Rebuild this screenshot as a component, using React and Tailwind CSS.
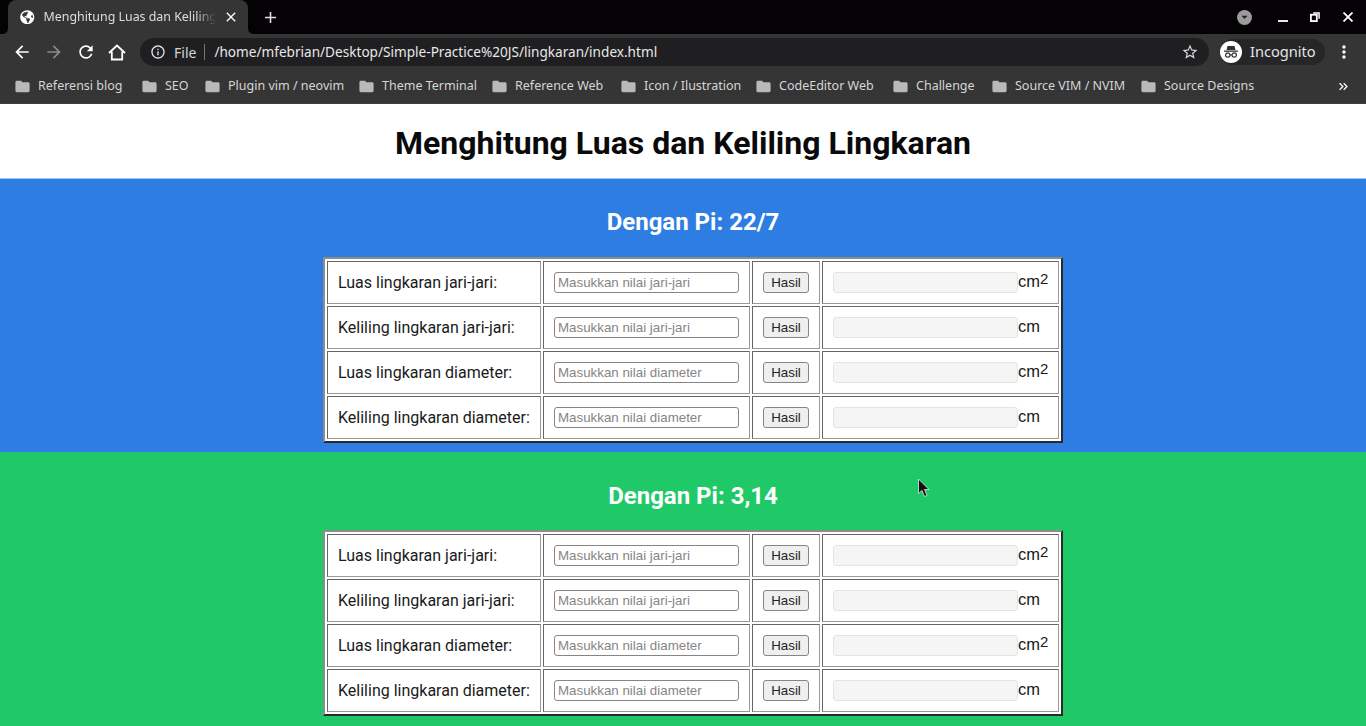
import React from "react";
import { MdArrowBack, MdArrowForward, MdRefresh, MdInfoOutline, MdStarBorder, MdMoreVert, MdKeyboardDoubleArrowRight, MdClose, MdAdd, MdFolder, MdArrowDropDown } from "react-icons/md";
import { FaGlobeAmericas } from "react-icons/fa";

const bookmarks = [
  ["Referensi blog", "w-[127px]"],
  ["SEO", "w-[63px]"],
  ["Plugin vim / neovim", "w-[154px]"],
  ["Theme Terminal", "w-[133px]"],
  ["Reference Web", "w-[129px]"],
  ["Icon / Ilustration", "w-[135px]"],
  ["CodeEditor Web", "w-[137px]"],
  ["Challenge", "w-[99px]"],
  ["Source VIM / NVIM", "w-[149px]"],
  ["Source Designs", "w-[120px]"],
];

const rows = [
  ["Luas lingkaran jari-jari:", "Masukkan nilai jari-jari", true],
  ["Keliling lingkaran jari-jari:", "Masukkan nilai jari-jari", false],
  ["Luas lingkaran diameter:", "Masukkan nilai diameter", true],
  ["Keliling lingkaran diameter:", "Masukkan nilai diameter", false],
];

function Calc() {
  return (
    <table className="border-separate border-spacing-[2px] border-2 border-t-[#8c8c8c] border-l-[#8c8c8c] border-r-[#2a2a2a] border-b-[#2a2a2a] bg-white w-[738px] table-fixed">
      <colgroup>
        <col className="w-[214px]" />
        <col className="w-[207px]" />
        <col className="w-[68px]" />
        <col className="w-[237px]" />
      </colgroup>
      <tbody>
        {rows.map(([label, ph, sq], i) => (
          <tr key={i} className="h-[43px]">
            <td className="border border-t-[#666] border-l-[#666] border-r-[#999] border-b-[#999] pl-[10px] p-0 text-[16px] text-[#1a1a1a] font-['Roboto',sans-serif] whitespace-nowrap">{label}</td>
            <td className="border border-t-[#666] border-l-[#666] border-r-[#999] border-b-[#999] pl-[10px] p-0">
              <input placeholder={ph} className="block -mt-px w-[185px] h-[21px] px-[3px] bg-white border border-[#858585] rounded-[3px] text-[13.33px] font-['Liberation_Sans',sans-serif] placeholder:text-[#858585] outline-none" />
            </td>
            <td className="border border-t-[#666] border-l-[#666] border-r-[#999] border-b-[#999] pl-[10px] p-0">
              <button className="block -mt-px w-[46px] h-[21px] bg-[#efefef] border border-[#858585] rounded-[3px] text-[13.33px] text-[#222] font-['Liberation_Sans',sans-serif]">Hasil</button>
            </td>
            <td className="border border-t-[#666] border-l-[#666] border-r-[#999] border-b-[#999] pl-[10px] p-0">
              <div className="flex items-center text-[16.5px] text-[#1a1a1a] font-['Liberation_Sans',sans-serif]">
                <input disabled className="block -mt-px w-[185px] h-[21px] bg-[#f5f5f5] border border-[#e4e4e4] rounded-[3px] outline-none" />
                <span className="relative bottom-[1px]">cm{sq && <sup className="text-[15px] relative -top-[3px] align-baseline">2</sup>}</span>
              </div>
            </td>
          </tr>
        ))}
      </tbody>
    </table>
  );
}

function Section({ title, bg, h, head }) {
  return (
    <section className={`${bg} ${h} flex flex-col items-center pl-5`}>
      <h2 className={`${head} text-[24px] leading-[28px] font-bold text-white font-['Roboto',sans-serif]`}>{title}</h2>
      <Calc />
    </section>
  );
}

export default function App() {
  return (
    <div className="relative w-[1366px] h-[726px] overflow-hidden bg-white">
      {/* tab strip */}
      <div className="h-[34px] bg-[#050205] flex items-stretch">
        <div className="ml-2 w-[240px] bg-[#353535] rounded-t-[8px] flex items-center pl-[12px] pr-[8px] text-[#dedede] relative">
          <svg className="absolute -left-[6px] bottom-0" width="6" height="6" viewBox="0 0 6 6"><path d="M0 6 Q6 6 6 0 V6Z" fill="#353535" /></svg>
          <svg className="absolute -right-[6px] bottom-0" width="6" height="6" viewBox="0 0 6 6"><path d="M6 6 Q0 6 0 0 V6Z" fill="#353535" /></svg>
          <FaGlobeAmericas className="text-white text-[14.5px] shrink-0" />
          <span className="ml-[9px] w-[172px] overflow-hidden whitespace-nowrap text-[12.4px] font-['Noto_Sans',sans-serif] [mask-image:linear-gradient(to_right,black_88%,transparent)]">Menghitung Luas dan Keliling</span>
          <MdClose className="ml-[7px] text-white text-[16px] shrink-0" />
        </div>
        <MdAdd className="ml-[13px] mt-[8px] text-[#dedede] text-[19px]" />
        <div className="flex-1" />
        <div className="flex items-center pr-[13px] text-white">
          <span className="w-[15px] h-[15px] rounded-full bg-[#9b9b9b] flex items-center justify-center mr-[26px]">
            <MdArrowDropDown className="text-[#222] text-[18px]" />
          </span>
          <span className="w-[10px] h-[2px] bg-[#e8e8e8] mt-[8px] mr-[22px]" />
          <svg width="10" height="10" viewBox="0 0 11 11" className="mr-[23px] -mt-[1px]" fill="none" stroke="white">
            <path d="M3.5 1h6.5v6.5" strokeWidth="1.6" />
            <rect x="1" y="3" width="6.5" height="7" strokeWidth="2" />
          </svg>
          <svg width="10" height="10" viewBox="0 0 10 10" stroke="white" strokeWidth="1.8" className="-mt-[1px]"><path d="M0.5 0.5 L9.5 9.5 M9.5 0.5 L0.5 9.5" /></svg>
        </div>
      </div>
      {/* toolbar */}
      <div className="h-[36px] bg-[#353535] flex items-center text-white">
        <MdArrowBack className="ml-[12px] text-[20px]" />
        <MdArrowForward className="ml-[12px] text-[20px] text-[#8a8a8a]" />
        <MdRefresh className="ml-[12px] text-[20px]" />
        <svg width="18" height="17" viewBox="0 0 18 17" className="ml-[12px] mr-[2px]" fill="none" stroke="white" strokeWidth="1.8">
          <path d="M1 9 L9 1.5 L17 9" />
          <path d="M3.8 7.5 V15.5 H14.2 V7.5" />
        </svg>
        <div className="ml-[12px] w-[1069px] h-[28px] rounded-full bg-[#1f1f21] flex items-center pl-[10px] pr-[10px]">
          <MdInfoOutline className="text-[16px] text-[#e2e2e2]" />
          <span className="ml-[8px] text-[14px] text-[#d4d4d4] font-['Noto_Sans',sans-serif]">File</span>
          <span className="ml-[8px] w-px h-[16px] bg-[#777]" />
          <span className="ml-[9px] text-[13.6px] text-[#e8e8e8] font-['Noto_Sans',sans-serif] whitespace-nowrap">/home/mfebrian/Desktop/Simple-Practice%20JS/lingkaran/index.html</span>
          <div className="flex-1" />
          <MdStarBorder className="text-[18px] text-[#d8d8d8]" />
        </div>
        <div className="ml-[11px] h-[26px] w-[105px] rounded-full bg-[#262628] flex items-center">
          <span className="w-[22px] h-[22px] rounded-full bg-white flex items-center justify-center">
            <svg width="16" height="14" viewBox="0 0 16 14" fill="#333">
              <path d="M4.5 1 L11.5 1 L12.5 5 L3.5 5Z" />
              <rect x="1" y="5.5" width="14" height="1.3" />
              <circle cx="4.8" cy="10" r="2.2" fill="none" stroke="#333" strokeWidth="1.2" />
              <circle cx="11.2" cy="10" r="2.2" fill="none" stroke="#333" strokeWidth="1.2" />
              <rect x="6.8" y="9.4" width="2.4" height="1" />
            </svg>
          </span>
          <span className="ml-[8px] text-[14.6px] text-[#e4e4e4] font-['Noto_Sans',sans-serif]">Incognito</span>
        </div>
        <MdMoreVert className="ml-[9px] text-[20px]" />
      </div>
      {/* bookmarks */}
      <div className="h-[34px] bg-[#353535] flex items-center pl-[15px] pb-[1px] border-b border-[#3d3d3d]">
        {bookmarks.map(([name, w]) => (
          <div key={name} className={`${w} flex items-center shrink-0`}>
            <MdFolder className="text-[#b9b9b9] text-[17px] shrink-0 -ml-[1px]" />
            <span className="ml-[7px] text-[12.5px] text-[#d6d6d6] font-['Noto_Sans',sans-serif] whitespace-nowrap">{name}</span>
          </div>
        ))}
        <div className="flex-1" />
        <MdKeyboardDoubleArrowRight className="text-white text-[15px] mr-[15px]" />
      </div>
      {/* page */}
      <header className="h-[75px] flex items-center justify-center bg-white pt-[3px] border-b border-[#9cc4f3]">
        <h1 className="text-[32px] font-bold text-[#0a0a0a] font-['Roboto',sans-serif] leading-none">Menghitung Luas dan Keliling Lingkaran</h1>
      </header>
      <Section title="Dengan Pi: 22/7" bg="bg-[#2d7de3]" h="h-[273px]" head="pt-[29px] mb-[21px]" />
      <Section title="Dengan Pi: 3,14" bg="bg-[#20c968]" h="h-[274px]" head="pt-[30px] mb-[20px]" />
      {/* mouse pointer */}
      <svg className="absolute left-[917px] top-[478px]" width="14" height="20" viewBox="0 0 14 20">
        <path d="M1.5 1 L1.5 15.5 L5 12.5 L7.5 18.5 L10 17.5 L7.5 11.5 L12 11.5 Z" fill="#111" stroke="#e8e8e8" strokeWidth="0.8" />
      </svg>
    </div>
  );
}
